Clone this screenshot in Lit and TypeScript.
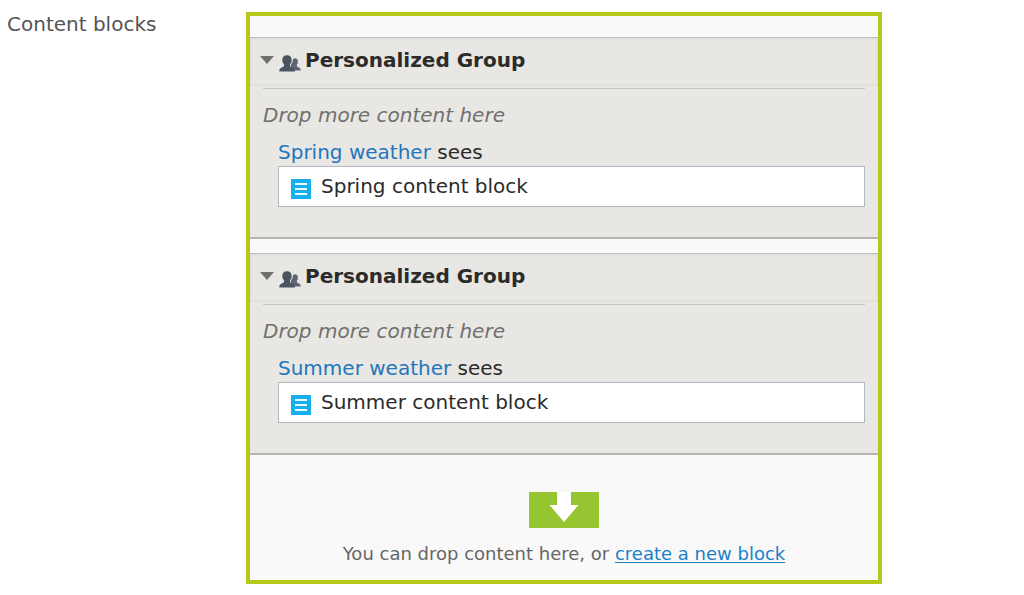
import { LitElement, html, css, svg } from "lit";
import { customElement, property, state } from "lit/decorators.js";

interface Group {
  audience: string;
  block: string;
}

const peopleIcon = html`<svg width="22" height="17" viewBox="0 0 22 17" aria-hidden="true">
  ${svg`<path fill="#5b6672" d="M16 3.300c1.900 0 2.900 1.400 2.900 3.300 0 1.300-.4 2.300-1 3v1.600c.3.800 3.100 1.200 3.600 2.500.2.600.3 1.300.3 1.900h-9l-1-5.500 1.800-3.200C13.600 4.900 14.400 3.300 16 3.300z"/>
  <path fill="#4a5561" d="M8 .3c3.100 0 4.700 2 4.700 4.700 0 1.800-.7 3.300-1.700 4.200v1.900c.6 1.100 4 1.600 4.600 3.200.2.700.3 1.500.3 2.200H.3c0-.7.100-1.500.3-2.200.6-1.600 3.900-2.100 4.400-3.200V9.200C4 8.300 3.300 6.800 3.300 5 3.300 2.300 4.900.3 8 .3z"/>`}
</svg>`;

const blockIcon = html`<svg width="20" height="20" viewBox="0 0 20 20" aria-hidden="true">
  ${svg`<path fill="#17b0ec" d="M0 0h20v20H0z"/>
  <path fill="#e9f9ff" d="M4 4h12v2H4zM4 9h12v2H4zM4 14h12v2H4z"/>`}
</svg>`;

const dropIcon = html`<svg width="70" height="36" viewBox="0 0 70 36" aria-hidden="true">
  ${svg`<rect width="70" height="36" rx="1" fill="#95c531"/>
  <path fill="#fff" d="M28 0h14v13h7.500L35 30 20.500 13H28z"/>`}
</svg>`;

@customElement("personalized-group")
export class PersonalizedGroup extends LitElement {
  @property() audience = "";
  @property() block = "";
  @state() private open = true;

  static styles = css`
    :host {
      display: block;
      border-top: 1px solid #bdbdbd;
      border-bottom: 2px solid #b4b4b4;
      background: #e8e7e3;
      color: #2b2b2b;
      line-height: 28px;
    }
    .header {
      display: flex;
      align-items: center;
      padding: 8px 10px 12px;
      box-shadow: inset 0 0 3px #cfcfcd;
    }
    .toggle {
      display: flex;
      padding: 0;
      border: 0;
      background: none;
      cursor: pointer;
    }
    .closed {
      transform: rotate(-90deg);
    }
    .people {
      display: flex;
      padding: 6px 4px 0 5px;
    }
    .title {
      margin: 0;
      font-size: 20px;
      font-weight: bold;
    }
    .body {
      margin: 2px 13px 0;
      padding: 12px 0 30px;
      border-top: 1px solid #c6c6c4;
    }
    .hint {
      margin: 0 0 9px;
      color: #707070;
      font-style: italic;
    }
    .variant {
      padding-left: 15px;
    }
    .rule {
      margin: 0;
    }
    .link {
      color: #2376bd;
      text-decoration: none;
    }
    .block {
      display: flex;
      align-items: center;
      gap: 10px;
      padding: 5px 12px 6px;
      border: 1px solid #b3b8c1;
      background: #fff;
    }
    .icon {
      display: flex;
      padding-top: 5px;
    }
  `;

  render() {
    return html`
      <header class="header">
        <button
          class="toggle ${this.open ? "" : "closed"}"
          aria-label="Toggle group"
          aria-expanded=${this.open}
          @click=${() => (this.open = !this.open)}
        >
          <svg width="14" height="8" viewBox="0 0 14 8"><path fill="#707070" d="M0 0h14L7 8z" /></svg>
        </button>
        <span class="people">${peopleIcon}</span>
        <h2 class="title">Personalized Group</h2>
      </header>
      ${this.open
        ? html`<div class="body">
            <p class="hint">Drop more content here</p>
            <div class="variant">
              <p class="rule"><a class="link" href="#">${this.audience}</a> sees</p>
              <div class="block"><span class="icon">${blockIcon}</span><span>${this.block}</span></div>
            </div>
          </div>`
        : null}
    `;
  }
}

@customElement("app-root")
export class AppRoot extends LitElement {
  private groups: Group[] = [
    { audience: "Spring weather", block: "Spring content block" },
    { audience: "Summer weather", block: "Summer content block" },
  ];

  static styles = css`
    :host {
      display: block;
      min-height: 100vh;
      box-sizing: border-box;
      padding: 12px 0;
      background: #fff;
      font: 20px/24px Verdana, "DejaVu Sans", sans-serif;
    }
    .field {
      display: grid;
      grid-template-columns: 246fr 636fr 142fr;
      align-items: start;
    }
    .label {
      margin: 0;
      padding-left: 7px;
      color: #555;
      font-size: 20px;
      font-weight: normal;
    }
    .area {
      border: 4px solid #b6c91a;
      background: #f9f9f9;
    }
    .groups {
      display: grid;
      gap: 14px;
      padding-top: 21px;
    }
    .drop {
      display: flex;
      flex-direction: column;
      align-items: center;
      gap: 14px;
      padding: 37px 12px 14px;
      color: #666;
      font-size: 18px;
    }
    .text {
      margin: 0;
    }
    .create {
      color: #2080c8;
      text-underline-offset: 2px;
    }
  `;

  render() {
    return html`
      <section class="field" aria-labelledby="label">
        <h1 class="label" id="label">Content blocks</h1>
        <div class="area">
          <div class="groups">
            ${this.groups.map(
              (g) => html`<personalized-group .audience=${g.audience} .block=${g.block}></personalized-group>`
            )}
          </div>
          <div class="drop">
            ${dropIcon}
            <p class="text">You can drop content here, or <a class="create" href="#">create a new block</a></p>
          </div>
        </div>
      </section>
    `;
  }
}
